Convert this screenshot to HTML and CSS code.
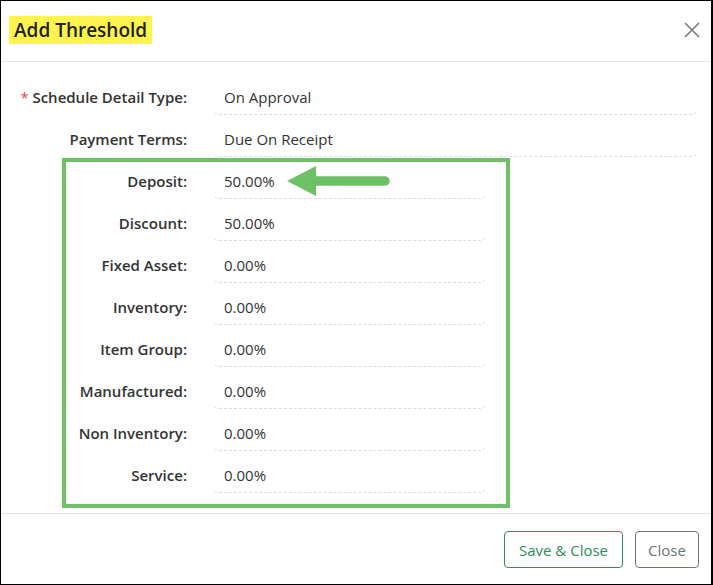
FILE: index.html
```html
<!DOCTYPE html>
<html>
<head>
<meta charset="utf-8">
<link rel="stylesheet" href="styles.css">
</head>
<body>
<div class="dialog">
  <div class="header">
    <h1 class="title">Add Threshold</h1>
    <button class="close-x" aria-label="Close">
      <svg width="16" height="16" viewBox="0 0 16 16"><path d="M1 1 L15 15 M15 1 L1 15" stroke="#7a7a7a" stroke-width="1.6" fill="none"/></svg>
    </button>
  </div>
  <div class="body">
    <div class="row">
      <div class="label"><span class="req">*</span> Schedule Detail Type:</div>
      <div class="value">On Approval</div>
    </div>
    <div class="row">
      <div class="label">Payment Terms:</div>
      <div class="value">Due On Receipt</div>
    </div>
    <div class="group">
      <div class="row">
        <div class="label">Deposit:</div>
        <div class="value">50.00%</div>
      </div>
      <div class="row">
        <div class="label">Discount:</div>
        <div class="value">50.00%</div>
      </div>
      <div class="row">
        <div class="label">Fixed Asset:</div>
        <div class="value">0.00%</div>
      </div>
      <div class="row">
        <div class="label">Inventory:</div>
        <div class="value">0.00%</div>
      </div>
      <div class="row">
        <div class="label">Item Group:</div>
        <div class="value">0.00%</div>
      </div>
      <div class="row">
        <div class="label">Manufactured:</div>
        <div class="value">0.00%</div>
      </div>
      <div class="row">
        <div class="label">Non Inventory:</div>
        <div class="value">0.00%</div>
      </div>
      <div class="row">
        <div class="label">Service:</div>
        <div class="value">0.00%</div>
      </div>
      <svg class="arrow" width="110" height="32" viewBox="0 0 110 32">
        <polygon points="0,15 29,0 29,30" fill="#6ec067"/>
        <line x1="27" y1="15" x2="98" y2="15" stroke="#6ec067" stroke-width="9.5" stroke-linecap="round"/>
      </svg>
    </div>
  </div>
  <div class="footer">
    <button class="btn btn-save">Save &amp; Close</button>
    <button class="btn btn-close">Close</button>
  </div>
</div>
</body>
</html>
```
FILE: styles.css
```css
* { box-sizing: border-box; }
html, body { margin: 0; padding: 0; background: #fff; }
body { font-family: "Open Sans", "Noto Sans", sans-serif; color: #333; }

.dialog {
  width: 713px;
  height: 585px;
  border: 1px solid #000;
  border-right-width: 2px;
  display: flex;
  flex-direction: column;
  background: #fff;
}

.header {
  height: 61px;
  border-bottom: 1px solid #e3e3e3;
  display: flex;
  align-items: center;
  justify-content: space-between;
  padding: 0 11px 0 8px;
  flex: none;
}
.title {
  margin: 0;
  font-size: 19px;
  font-weight: 600;
  color: #222;
  background: #fff44e;
  padding: 0 5px;
  height: 28px;
  line-height: 28px;
  margin-top: -2px;
}
.close-x {
  border: 0;
  background: transparent;
  padding: 0;
  width: 16px;
  height: 16px;
  display: flex;
  margin-top: -2px;
}

.body {
  flex: 1;
  padding-top: 19px;
  position: relative;
}

.row {
  display: flex;
  height: 34px;
  margin-bottom: 8px;
  align-items: stretch;
}
.label {
  width: 212px;
  padding-right: 26px;
  text-align: right;
  font-size: 15px;
  font-weight: 600;
  color: #333;
  line-height: 32px;
  white-space: nowrap;
}
.req { color: #e0443e; font-weight: 400; font-size: 14px; }
.value {
  width: 484px;
  padding-left: 11px;
  font-size: 15px;
  line-height: 32px;
  color: #333;
  border-bottom: 1px dashed #dcdcdc;
  border-radius: 0 0 6px 6px;
}

.group {
  position: relative;
  margin-left: 61px;
  width: 448px;
  border: 4px solid #6ec067;
  padding-top: 3px;
  padding-bottom: 3px;
  margin-top: -7px;
}
.group .label { width: 147px; }
.group .value { width: 273px; }

.arrow {
  position: absolute;
  left: 221px;
  top: 4px;
}

.footer {
  flex: none;
  height: 71px;
  border-top: 1px solid #e3e3e3;
  display: flex;
  justify-content: flex-end;
  align-items: flex-start;
  gap: 12px;
  padding: 17px 12px 0 0;
}
.btn {
  height: 37px;
  background: #fff;
  font-family: "Open Sans", "Noto Sans", sans-serif;
  font-size: 15px;
  border-radius: 4px;
  padding: 0 10px;
}
.btn-save { width: 119px; color: #2b8f5b; border: 1px solid #2b8f5b; }
.btn-close { width: 64px; color: #6c757d; border: 1px solid #6c757d; }
```
